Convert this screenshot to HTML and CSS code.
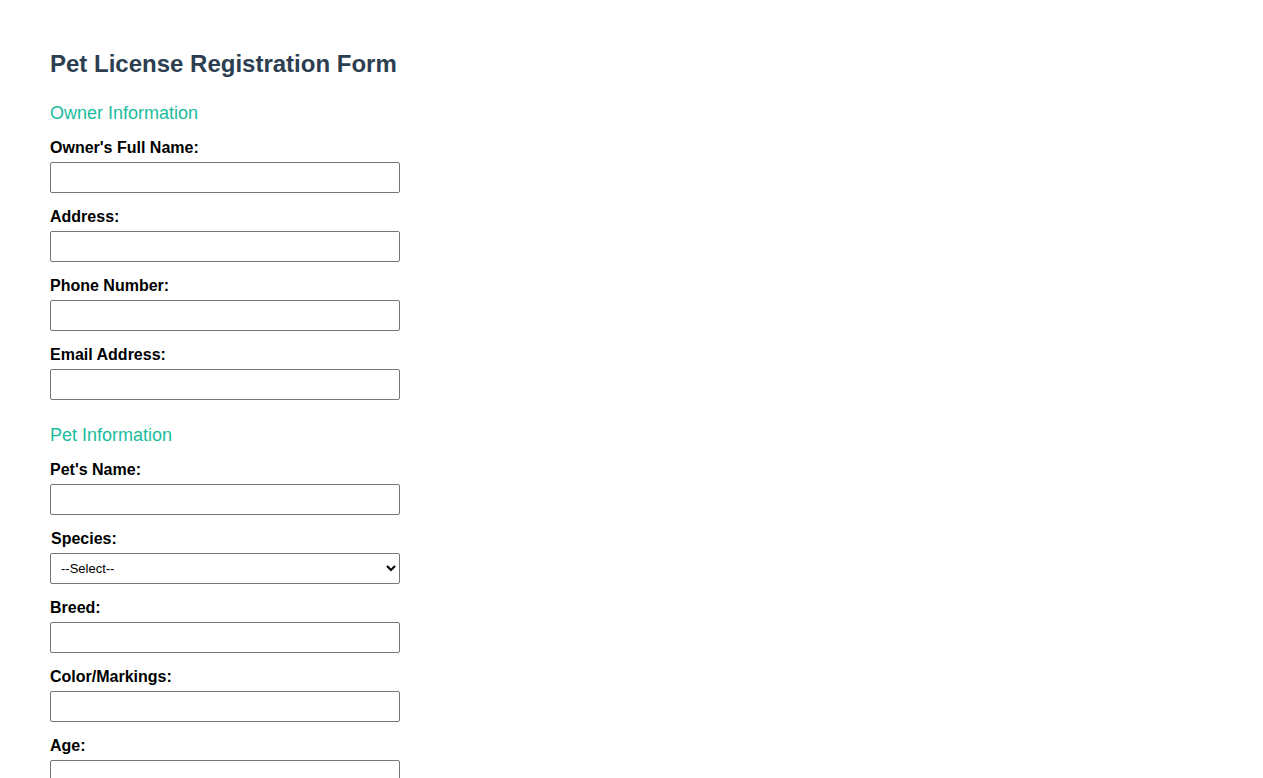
FILE: index.html
```html
<!DOCTYPE html>
<html lang="en">
<head>
<meta charset="utf-8">
<title>Pet License Registration Form</title>
<link rel="stylesheet" href="styles.css">
</head>
<body>
<div class="page">
  <h2 class="title">Pet License Registration Form</h2>
  <form class="form">
    <h3 class="section">Owner Information</h3>
    <div class="group"><label class="label">Owner's Full Name:</label><input class="field" type="text"></div>
    <div class="group"><label class="label">Address:</label><input class="field" type="text"></div>
    <div class="group"><label class="label">Phone Number:</label><input class="field" type="text"></div>
    <div class="group"><label class="label">Email Address:</label><input class="field" type="text"></div>

    <h3 class="section">Pet Information</h3>
    <div class="group"><label class="label">Pet's Name:</label><input class="field" type="text"></div>
    <div class="group"><label class="label label-shift">Species:</label><select class="field select"><option>--Select--</option><option>Dog</option><option>Cat</option></select></div>
    <div class="group"><label class="label">Breed:</label><input class="field" type="text"></div>
    <div class="group"><label class="label">Color/Markings:</label><input class="field" type="text"></div>
    <div class="group"><label class="label">Age:</label><input class="field" type="text"></div>
  </form>
</div>
</body>
</html>
```
FILE: styles.css
```css
html, body {
  margin: 0;
  padding: 0;
  background: #ffffff;
}
body {
  font-family: "Liberation Sans", Arial, sans-serif;
  color: #000;
}
.page {
  padding: 50px;
}
.title {
  margin: 0 0 25px;
  font-size: 24px;
  line-height: 28px;
  font-weight: bold;
  color: #2c3e50;
}
.form {
  margin: 0;
}
.section {
  margin: 25px 0 14px;
  font-size: 18px;
  line-height: 21px;
  font-weight: normal;
  color: #1abc9c;
}
.title + .form .section:first-child {
  margin-top: 0;
}
.group {
  margin-bottom: 14px;
}
.label {
  display: block;
  font-size: 16px;
  line-height: 18px;
  font-weight: bold;
  padding-top: 1px;
  margin-bottom: 5px;
}
.label-shift {
  padding-left: 1px;
}
.field {
  display: block;
  box-sizing: border-box;
  width: 350px;
  height: 31px;
  margin: 0;
  padding: 4px 8px;
  border: 1px solid #767676;
  border-radius: 2px;
  background: #fff;
  font-family: "Liberation Sans", Arial, sans-serif;
  font-size: 13px;
}
.select {
  padding: 4px 6px;
  color: #000;
}
```
